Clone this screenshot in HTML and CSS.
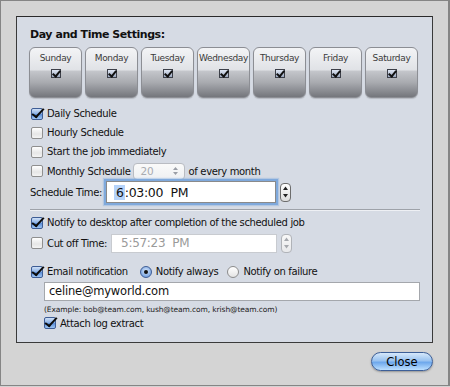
FILE: index.html
```html
<!DOCTYPE html>
<html>
<head>
<meta charset="utf-8">
<link rel="stylesheet" href="styles.css">
</head>
<body>
<div class="frame">
  <div class="panel">
    <div class="title">Day and Time Settings:</div>
    <div class="days">
      <div class="day"><span class="dlabel">Sunday</span><span class="dcheck"></span></div>
      <div class="day"><span class="dlabel">Monday</span><span class="dcheck"></span></div>
      <div class="day"><span class="dlabel">Tuesday</span><span class="dcheck"></span></div>
      <div class="day"><span class="dlabel">Wednesday</span><span class="dcheck"></span></div>
      <div class="day"><span class="dlabel">Thursday</span><span class="dcheck"></span></div>
      <div class="day"><span class="dlabel">Friday</span><span class="dcheck"></span></div>
      <div class="day"><span class="dlabel">Saturday</span><span class="dcheck"></span></div>
    </div>

    <div class="row"><span class="cb on"></span><span>Daily Schedule</span></div>
    <div class="row"><span class="cb"></span><span>Hourly Schedule</span></div>
    <div class="row"><span class="cb"></span><span>Start the job immediately</span></div>
    <div class="row monthrow"><span class="cb"></span><span>Monthly Schedule</span>
      <span class="select"><span class="seltext">20</span><span class="selarrows"><svg width="7" height="10" viewBox="0 0 7 10"><path d="M1 4 L3.5 1 L6 4 Z M1 6 L3.5 9 L6 6 Z" fill="#9a9ea6"/></svg></span></span>
      <span>of every month</span>
    </div>
    <div class="row timerow">
      <span class="tlabel">Schedule Time:</span>
      <span class="tinput focus"><span class="sel">6</span>:03:00&nbsp; PM</span>
      <span class="stepper"><svg width="7" height="14" viewBox="0 0 7 14"><path d="M1 5 L3.5 1.5 L6 5 Z M1 9 L3.5 12.5 L6 9 Z" fill="#222"/></svg></span>
    </div>
    <div class="sep"></div>
    <div class="row"><span class="cb on"></span><span>Notify to desktop after completion of the scheduled job</span></div>
    <div class="row cutrow"><span class="cb"></span><span class="tlabel2">Cut off Time:</span>
      <span class="tinput dis">5:57:23&nbsp; PM</span>
      <span class="stepper dis"><svg width="7" height="14" viewBox="0 0 7 14"><path d="M1 5 L3.5 1.5 L6 5 Z M1 9 L3.5 12.5 L6 9 Z" fill="#a6a9ae"/></svg></span>
    </div>
    <div class="row emailrow"><span class="cb on"></span><span class="elabel">Email notification</span>
      <span class="radio on"></span><span class="rlabel">Notify always</span>
      <span class="radio"></span><span>Notify on failure</span>
    </div>
    <div class="email">celine@myworld.com</div>
    <div class="example">(Example: bob@team.com, kush@team.com, krish@team.com)</div>
    <div class="row attach"><span class="cb on"></span><span>Attach log extract</span></div>
  </div>
  <div class="footer">
    <button class="close">Close</button>
  </div>
</div>
</body>
</html>
```
FILE: styles.css
```css
* { box-sizing: border-box; }
html, body { margin: 0; padding: 0; }
body {
  width: 450px; height: 387px; overflow: hidden;
  background: #d3d3d3;
  font-family: "DejaVu Sans", "Liberation Sans", sans-serif;
  font-size: 10px;
  color: #111;
}
.frame {
  width: 450px; height: 386px;
  border: 1px solid #858585;
  border-right-width: 2px;
  background: #d4d4d4;
  padding: 15px 0 0 15px;
}
.panel {
  width: 417px; height: 327px;
  border: 1px solid #3a3a3a;
  border-top-color: #2a2a2a;
  background: #d6dbe4;
  padding: 10px 0 0 13px;
}
.title {
  font-weight: bold;
  font-size: 11px;
  letter-spacing: -0.45px;
  height: 20px;
  line-height: 14px;
  padding-top: 1px;
}
.days { display: flex; gap: 3px; height: 51px; margin-bottom: 6px; margin-left: -1px; }
.day {
  width: 53px; height: 51px;
  border: 1px solid #8c8e94;
  border-radius: 6px;
  background: linear-gradient(#f3f4f6 0%, #e0e2e6 45%, #c4c6cb 47%, #a9abb0 70%, #74767c 100%);
  display: flex; flex-direction: column; align-items: center;
  box-shadow: 0 1px 1px rgba(0,0,0,0.15);
}
.dlabel { font-size: 9px; color: #3a3a3a; margin-top: 5px; letter-spacing: -0.35px; line-height: 11px; white-space: nowrap; }
.dcheck {
  width: 10px; height: 9px; margin-top: 5px;
  border: 1px solid #3c3f48;
  background: linear-gradient(#dfe6f3, #9aa7bf);
  position: relative;
}
.dcheck::after {
  content: ""; position: absolute; left: 2px; top: -1px;
  width: 3px; height: 6px;
  border: solid #111; border-width: 0 2px 2px 0;
  transform: rotate(40deg);
}
.row { display: flex; align-items: center; height: 19px; white-space: nowrap; letter-spacing: -0.35px; }
.row > span { flex: none; }
.cb {
  width: 12px; height: 12px; margin: 0 4px 0 1px;
  border: 1px solid #8f8f8f;
  border-radius: 2px;
  background: linear-gradient(#ffffff, #e6e6e6 60%, #f4f4f4);
  position: relative;
}
.cb.on {
  border-color: #3e5d95;
  background: linear-gradient(#cfe0f7 0%, #8eb3e6 45%, #5d8fd8 55%, #9cc4f3 100%);
}
.cb.on::after {
  content: ""; position: absolute; left: 3px; top: -3px;
  width: 4px; height: 10px;
  border: solid #0c0c0c; border-width: 0 2.5px 2.5px 0;
  transform: rotate(35deg) skewX(-8deg);
}
.monthrow { height: 20px; }
.select {
  display: inline-flex; align-items: center;
  width: 52px; height: 17px; margin: 0 4px 0 2px;
  border: 1px solid #b9bcc2; border-radius: 4px;
  background: linear-gradient(#fafafa, #eef0f2);
  color: #a8abb0; font-size: 10.5px;
}
.seltext { flex: 1; padding-left: 7px; }
.selarrows { width: 13px; height: 15px; display: flex; align-items: center; justify-content: center; margin-right: 2px; }
.timerow { height: 24px; margin-top: -1px; }
.tlabel { margin-right: 4px; }
.tinput {
  display: flex; align-items: center;
  width: 170px; height: 22px;
  background: #fff;
  font-size: 12.5px; letter-spacing: -0.3px;
  padding-left: 7px;
}
.tinput.focus {
  border: 1px solid #8a8a8a;
  box-shadow: 0 0 0 2px #7fa9dc, 0 0 1px 3px rgba(127,169,220,0.4);
}
.sel { background: #b5d3fa; padding: 0 1px 0 2px; }
.stepper {
  width: 11px; height: 19px; margin-left: 4px;
  border: 1px solid #6d6d6d; border-radius: 4px;
  background: linear-gradient(#ffffff, #dcdcdc);
  display: flex; align-items: center; justify-content: center;
}
.stepper.dis { border-color: #b0b3b8; background: linear-gradient(#f8f8f8, #e8e9eb); }
.sep { height: 2px; background: #9ea2a9; margin: 5px 12px 2px 0; border-bottom: 1px solid #eef0f4; }
.cutrow { height: 20px; margin-top: 1px; }
.tlabel2 { margin-right: 4px; }
.tinput.dis {
  width: 166px; height: 19px;
  border: 1px solid #c8cbd0;
  color: #9a9a9a; font-size: 12px; padding-left: 9px;
}
.emailrow { margin-top: 10px; height: 17px; }
.elabel { margin-right: 12px; }
.radio {
  width: 12px; height: 12px; border-radius: 50%;
  border: 1px solid #8c8c8c;
  background: linear-gradient(#ffffff, #e4e4e4);
  margin-right: 4px; position: relative;
}
.radio.on { border-color: #3e5d95; background: radial-gradient(circle at 50% 40%, #d9e8fb, #7fa8e2 70%, #5b8bd4); }
.radio.on::after {
  content: ""; position: absolute; left: 3px; top: 3px; width: 4px; height: 4px; border-radius: 50%; background: #111;
}
.rlabel { margin-right: 9px; }
.email {
  width: 376px; height: 19px; margin: 2px 0 0 14px;
  background: #fff; border: 1px solid #a4a7ac;
  font-size: 11.5px; padding-left: 4px; line-height: 17px; letter-spacing: -0.2px;
}
.example { font-size: 7.5px; color: #222; margin: 4px 0 0 14px; height: 10px; line-height: 10px; letter-spacing: -0.1px; }
.attach { padding-left: 13px; height: 18px; margin-top: -1px; }
.footer { display: flex; justify-content: flex-end; padding: 9px 15px 0 0; }
.close {
  width: 62px; height: 19px;
  border: 1px solid #3d5f98; border-radius: 10px;
  background: linear-gradient(#d6e8fb 0%, #9ac3f0 45%, #6ea8ec 55%, #bde0ff 100%);
  font-family: "DejaVu Sans", sans-serif; font-size: 11.5px; color: #000;
  padding: 0; line-height: 16px;
  box-shadow: 0 1px 2px rgba(0,0,0,0.3);
}
```
